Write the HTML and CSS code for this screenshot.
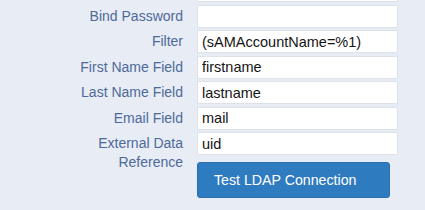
FILE: index.html
```html
<!DOCTYPE html>
<html lang="en">
	<head>
		<meta charset="UTF-8" />
		<meta name="viewport" content="width=device-width, initial-scale=1.0" />
		<title>LDAP Settings</title>
		<link rel="stylesheet" href="styles.css">
	</head>
	<body>
		<div class="ldap-form">
			<span class="field-label"></span>
			<input class="field-input" type="text" aria-label="Bind User" />

			<label class="field-label" for="bindPassword">Bind Password</label>
			<input class="field-input" type="password" id="bindPassword" />

			<label class="field-label" for="filter">Filter</label>
			<input class="field-input" type="text" id="filter" value="(sAMAccountName=%1)" />

			<label class="field-label" for="firstName">First Name Field</label>
			<input class="field-input" type="text" id="firstName" value="firstname" />

			<label class="field-label" for="lastName">Last Name Field</label>
			<input class="field-input" type="text" id="lastName" value="lastname" />

			<label class="field-label" for="email">Email Field</label>
			<input class="field-input" type="text" id="email" value="mail" />

			<label class="field-label" for="externalRef">External Data Reference</label>
			<input class="field-input" type="text" id="externalRef" value="uid" />

			<div class="button-row">
				<button class="test-button">Test LDAP Connection</button>
			</div>
		</div>
	</body>
</html>
```

FILE: styles.css
```css
body {
	margin: 0;
	padding: 0 0 0 68px;
	background-color: #e8ecf4;
	font-family: "Liberation Sans", Arial, sans-serif;
	overflow: hidden;
}
.ldap-form {
	display: grid;
	grid-template-columns: 115px 201px;
	column-gap: 14px;
	row-gap: 2.5px;
	margin-top: -21px;
}
.field-label {
	height: 23px;
	padding-top: 2px;
	box-sizing: border-box;
	line-height: 19px;
	font-size: 14px;
	color: #4d6a9a;
	text-align: right;
}
.field-input {
	height: 23px;
	box-sizing: border-box;
	margin: 0;
	padding: 0 4px;
	border: 1px solid #dde1e8;
	border-radius: 1px;
	background-color: #fff;
	font-family: "Liberation Sans", Arial, sans-serif;
	font-size: 14.5px;
	color: #151515;
	outline: none;
}
.button-row {
	grid-column: 2;
	margin-top: 4.5px;
}
.test-button {
	width: 193px;
	height: 36px;
	padding: 0 0 0 16px;
	text-align: left;
	background-color: #2f7bbf;
	border: 1px solid #2a6fae;
	border-radius: 3px;
	color: #fff;
	font-family: "Liberation Sans", Arial, sans-serif;
	font-size: 14.2px;
	cursor: pointer;
}
```
